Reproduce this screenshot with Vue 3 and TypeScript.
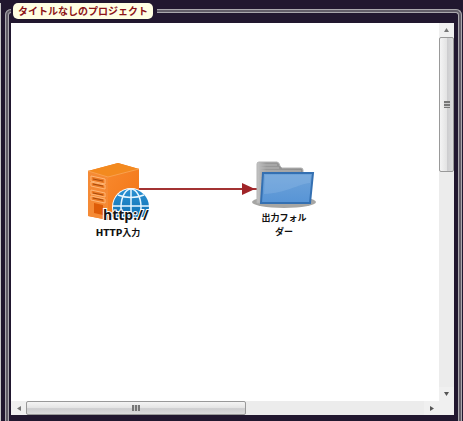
<script setup lang="ts">
interface FlowNode {
  id: string
  kind: 'http' | 'folder'
  label: string
  x: number
  y: number
}

const projectTitle = 'タイトルなしのプロジェクト'

const nodes: FlowNode[] = [
  { id: 'input', kind: 'http', label: 'HTTP入力', x: 74, y: 138 },
  { id: 'output', kind: 'folder', label: '出力フォルダー', x: 240, y: 137 },
]
</script>

<template>
  <main class="workspace">
    <fieldset class="frame">
      <legend class="legend"><span class="title">{{ projectTitle }}</span></legend>
      <div class="viewport">
        <div class="canvas">
          <svg class="link" width="122" height="14" viewBox="0 0 122 14" aria-hidden="true">
            <path d="M0 7H121" stroke="#a33333" stroke-width="2" />
            <path d="M104 1L117 7L104 13Z" fill="#a02428" />
          </svg>
          <div
            v-for="node in nodes"
            :key="node.id"
            class="node"
            :style="{ left: node.x + 'px', top: node.y + 'px' }"
          >
            <svg v-if="node.kind === 'http'" class="icon" width="66" height="64" viewBox="0 0 66 64" aria-hidden="true">
              <defs>
                <linearGradient id="side" x1="0" y1="0" x2="1" y2="1">
                  <stop offset="0" stop-color="#f8882c" />
                  <stop offset="1" stop-color="#f27416" />
                </linearGradient>
                <linearGradient id="globe" x1="0" y1="0" x2="0" y2="1">
                  <stop offset="0" stop-color="#2b91d2" />
                  <stop offset="1" stop-color="#0868ac" />
                </linearGradient>
              </defs>
              <path d="M3 10L33 2L54 8V54L23 59L3 55Z" fill="#f47b20" />
              <path d="M3 10L33 2L54 8L23 16Z" fill="#f38a1f" />
              <path d="M23 16L54 8V54L23 59Z" fill="url(#side)" />
              <path d="M3 10L23 16V59L3 55Z" fill="#f58a35" />
              <path d="M3 10L23 16L54 8" fill="none" stroke="#f9a14e" />
              <g fill="#ec7a24" stroke="#ffb878" stroke-width="1">
                <path d="M6 15L20 18V23L6 20Z" />
                <path d="M6 21L20 24V28L6 25Z" />
                <path d="M6 29L20 32V36L6 33Z" />
                <path d="M6 35L20 38V42L6 39Z" />
              </g>
              <path d="M8 18L18 20M8 23L18 25M8 32L18 34M8 37L18 39" stroke="#a84b0c" />
              <path d="M9 42L18 44V54L9 52Z" fill="#de5c08" />
              <circle cx="46" cy="46" r="19" fill="#fff" />
              <circle cx="46" cy="46" r="18" fill="url(#globe)" />
              <g fill="none" stroke="#e8f6ff" stroke-width="1.5">
                <path d="M46 28V64M28 45H64M33 34Q46 39 59 34" />
                <ellipse cx="46" cy="46" rx="10" ry="18" />
              </g>
              <path d="M26 56H66V64H26Z" fill="#fff" />
              <text class="protocol" x="18" y="59">http://</text>
            </svg>
            <svg v-else class="icon" width="66" height="50" viewBox="0 0 66 50" aria-hidden="true">
              <defs>
                <linearGradient id="back" x1="0" y1="0" x2="1" y2="0">
                  <stop offset="0" stop-color="#c5c5c5" />
                  <stop offset="0.2" stop-color="#999" />
                  <stop offset="1" stop-color="#8e8e8e" />
                </linearGradient>
                <linearGradient id="front" x1="0" y1="0" x2="0" y2="1">
                  <stop offset="0" stop-color="#6fa3d9" />
                  <stop offset="1" stop-color="#5794d6" />
                </linearGradient>
              </defs>
              <ellipse cx="33" cy="42" rx="32" ry="6" fill="#a6a6a4" />
              <path d="M6 43V4Q6 2 8 2H26Q28 2 29 6L31 8H50Q52 8 52 10V43Z" fill="url(#back)" stroke="#b4b4b4" />
              <path d="M9 5H26M9 8H28M9 11H50M9 16H12M9 19H12M9 22H12M9 25H12M9 28H11M9 31H11M9 34H11" stroke="#b8b8b8" />
              <path d="M12 13H62L59 43H10Z" fill="url(#front)" stroke="#3470b2" stroke-width="2" />
              <path d="M14 15H60L59 23C47 24 36 33 13 34Z" fill="#a4c7ec" opacity="0.25" />
            </svg>
            <span class="label">{{ node.label }}</span>
          </div>
        </div>
        <div class="bar vertical">
          <button class="step" type="button" aria-label="上へスクロール">
            <svg width="5" height="4" viewBox="0 0 5 4"><path d="M2.5 0L5 4H0Z" fill="#777" /></svg>
          </button>
          <div class="thumb"><span class="grip"></span></div>
          <div class="track"></div>
          <button class="step" type="button" aria-label="下へスクロール">
            <svg width="5" height="4" viewBox="0 0 5 4"><path d="M0 0H5L2.5 4Z" fill="#555" /></svg>
          </button>
        </div>
        <div class="bar horizontal">
          <button class="step" type="button" aria-label="左へスクロール">
            <svg width="4" height="5" viewBox="0 0 4 5"><path d="M4 0V5L0 2.5Z" fill="#777" /></svg>
          </button>
          <div class="thumb"><span class="grip"></span></div>
          <div class="track"></div>
          <button class="step" type="button" aria-label="右へスクロール">
            <svg width="4" height="5" viewBox="0 0 4 5"><path d="M0 0L4 2.5L0 5Z" fill="#555" /></svg>
          </button>
        </div>
        <div class="corner"></div>
      </div>
    </fieldset>
  </main>
</template>

<style>
body {
  background: #21172f;
}
</style>

<style scoped>
.workspace {
  box-sizing: border-box;
  height: 100vh;
  padding: 3px 1px 0 5px;
  overflow: hidden;
  background: linear-gradient(#c8c8c8, #c8c8c8) 0 3px / 1px 100% no-repeat #21172f;
  font-family: "Noto Sans", "Noto Sans CJK JP", sans-serif;
}

.frame {
  box-sizing: border-box;
  display: flex;
  min-width: 0;
  height: calc(100vh + 6px);
  margin: 0;
  padding: 4px 4px 15px 2px;
  border: 4px double #aaa8ad;
  border-bottom: 0;
  border-radius: 6px;
  background: linear-gradient(#21172f, #21172f) padding-box, #625d68 border-box;
}

.legend {
  height: 16px;
  padding: 0 4px 0 2px;
  background: #21172f;
}

.title {
  display: block;
  padding: 0 5px;
  border-radius: 5px;
  background: #ffffe3;
  color: #8c1418;
  font-size: 10px;
  font-weight: 700;
  line-height: 16px;
  white-space: nowrap;
}

.viewport {
  display: grid;
  grid-template: minmax(0, 1fr) 14px / minmax(0, 1fr) 15px;
  width: 100%;
  height: 100%;
  background: #fff;
}

.canvas {
  position: relative;
  overflow: hidden;
}

.link {
  position: absolute;
  top: 159px;
  left: 127px;
}

.node {
  position: absolute;
  display: flex;
  flex-direction: column;
  gap: 1px;
  align-items: center;
  width: 66px;
}

.icon {
  display: block;
}

.protocol {
  fill: #151515;
  stroke: #fff;
  stroke-width: 2px;
  paint-order: stroke;
  font-family: "Open Sans", "Noto Sans", sans-serif;
  font-size: 14px;
  font-weight: 700;
}

.label {
  width: 50px;
  color: #111;
  font-family: "DejaVu Sans", "Noto Sans CJK JP", sans-serif;
  font-size: 9px;
  font-weight: 700;
  line-height: 14px;
  text-align: center;
}

.bar {
  display: flex;
  background: #ececec;
}

.vertical {
  flex-direction: column;
}

.step {
  display: flex;
  flex: none;
  align-items: center;
  justify-content: center;
  width: 15px;
  height: 14px;
  padding: 0;
  border: 0;
  background: #f0f0f0;
}

.thumb {
  box-sizing: border-box;
  display: flex;
  align-items: center;
  justify-content: center;
  border: 1px solid #999;
  border-radius: 2px;
}

.vertical .thumb {
  flex: 133;
  background: linear-gradient(90deg, #f4f4f4, #e4e4e4 50%, #cdcdcf 55%, #dcdcdc);
}

.vertical .track {
  flex: 216;
}

.horizontal .thumb {
  flex: 219;
  background: linear-gradient(#f4f4f4, #e4e4e4 50%, #cdcdcf 55%, #dcdcdc);
}

.horizontal .track {
  flex: 179;
}

.grip {
  width: 6px;
  height: 7px;
  background: repeating-linear-gradient(#777 0 2px, #ccc 2px 3px);
}

.horizontal .grip {
  width: 8px;
  height: 6px;
  background: repeating-linear-gradient(90deg, #777 0 2px, #ccc 2px 3px);
}

.corner {
  background: #f0f0f0;
}
</style>
